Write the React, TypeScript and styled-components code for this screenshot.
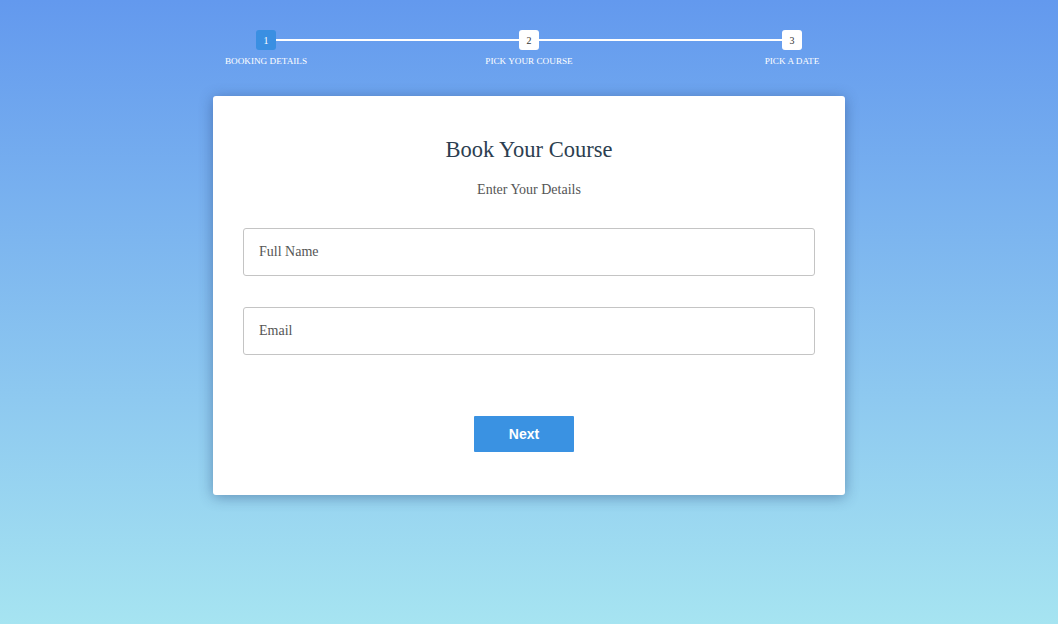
import React from "react";
import styled, { createGlobalStyle } from "styled-components";

const GlobalStyle = createGlobalStyle`
  html, body {
    margin: 0;
    padding: 0;
  }
  body {
    min-height: 624px;
    background: linear-gradient(to bottom, #6399ee 0%, #a6e4f1 100%);
    font-family: "Liberation Serif", "DejaVu Serif", serif;
  }
`;

const Page = styled.div`
  display: flex;
  flex-direction: column;
  align-items: center;
  padding-top: 30px;
  height: 594px;
`;

const Stepper = styled.div`
  position: relative;
  display: grid;
  grid-template-columns: repeat(3, 120px);
  justify-content: space-between;
  width: 646px;
`;

const Track = styled.div`
  position: absolute;
  left: 60px;
  right: 60px;
  top: 9px;
  height: 2px;
  background: #ffffff;
`;

const Step = styled.div`
  position: relative;
  display: flex;
  flex-direction: column;
  align-items: center;
  gap: 6px;
`;

const Dot = styled.div<{ active?: boolean }>`
  width: 20px;
  height: 20px;
  border-radius: 3px;
  display: flex;
  align-items: center;
  justify-content: center;
  font-size: 10px;
  background: ${p => (p.active ? "#3a8fe2" : "#ffffff")};
  color: ${p => (p.active ? "#ffffff" : "#333333")};
`;

const StepLabel = styled.div`
  font-size: 9.2px;
  color: #ffffff;
  text-transform: uppercase;
  white-space: nowrap;
`;

const Card = styled.div`
  margin-top: 30px;
  width: 632px;
  height: 399px;
  box-sizing: border-box;
  background: #ffffff;
  border-radius: 3px;
  box-shadow: 0 2px 14px rgba(30, 60, 110, 0.45);
  padding: 39px 30px 0;
  display: flex;
  flex-direction: column;
`;

const Title = styled.h1`
  margin: 0;
  text-align: center;
  font-weight: normal;
  font-size: 22.5px;
  color: #2c3e50;
  line-height: 30px;
`;

const Subtitle = styled.p`
  margin: 16px 0 0;
  text-align: center;
  font-size: 14px;
  color: #555555;
  line-height: 18px;
`;

const Fields = styled.div`
  margin-top: 29px;
  display: flex;
  flex-direction: column;
  gap: 31px;
`;

const Input = styled.input`
  box-sizing: border-box;
  width: 100%;
  height: 48px;
  border: 1px solid #c4c4c4;
  border-radius: 3px;
  padding: 0 15px;
  font-family: "Liberation Serif", "DejaVu Serif", serif;
  font-size: 14px;
  color: #333;
  outline: none;
  &::placeholder {
    color: #555555;
  }
`;

const Actions = styled.div`
  margin-top: 61px;
  display: flex;
  justify-content: center;
  padding-right: 10px;
`;

const Button = styled.button`
  width: 100px;
  height: 36px;
  border: none;
  border-radius: 1px;
  background: #3a92e2;
  color: #ffffff;
  font-family: "Liberation Sans", Arial, sans-serif;
  font-weight: bold;
  font-size: 14px;
  cursor: pointer;
`;

const steps = ["Booking Details", "Pick Your Course", "Pick a Date"];

export default function App() {
  return (
    <>
      <GlobalStyle />
      <Page>
        <Stepper>
          <Track />
          {steps.map((s, i) => (
            <Step key={s}>
              <Dot active={i === 0}>{i + 1}</Dot>
              <StepLabel>{s}</StepLabel>
            </Step>
          ))}
        </Stepper>
        <Card>
          <Title>Book Your Course</Title>
          <Subtitle>Enter Your Details</Subtitle>
          <Fields>
            <Input placeholder="Full Name" />
            <Input placeholder="Email" />
          </Fields>
          <Actions>
            <Button>Next</Button>
          </Actions>
        </Card>
      </Page>
    </>
  );
}
